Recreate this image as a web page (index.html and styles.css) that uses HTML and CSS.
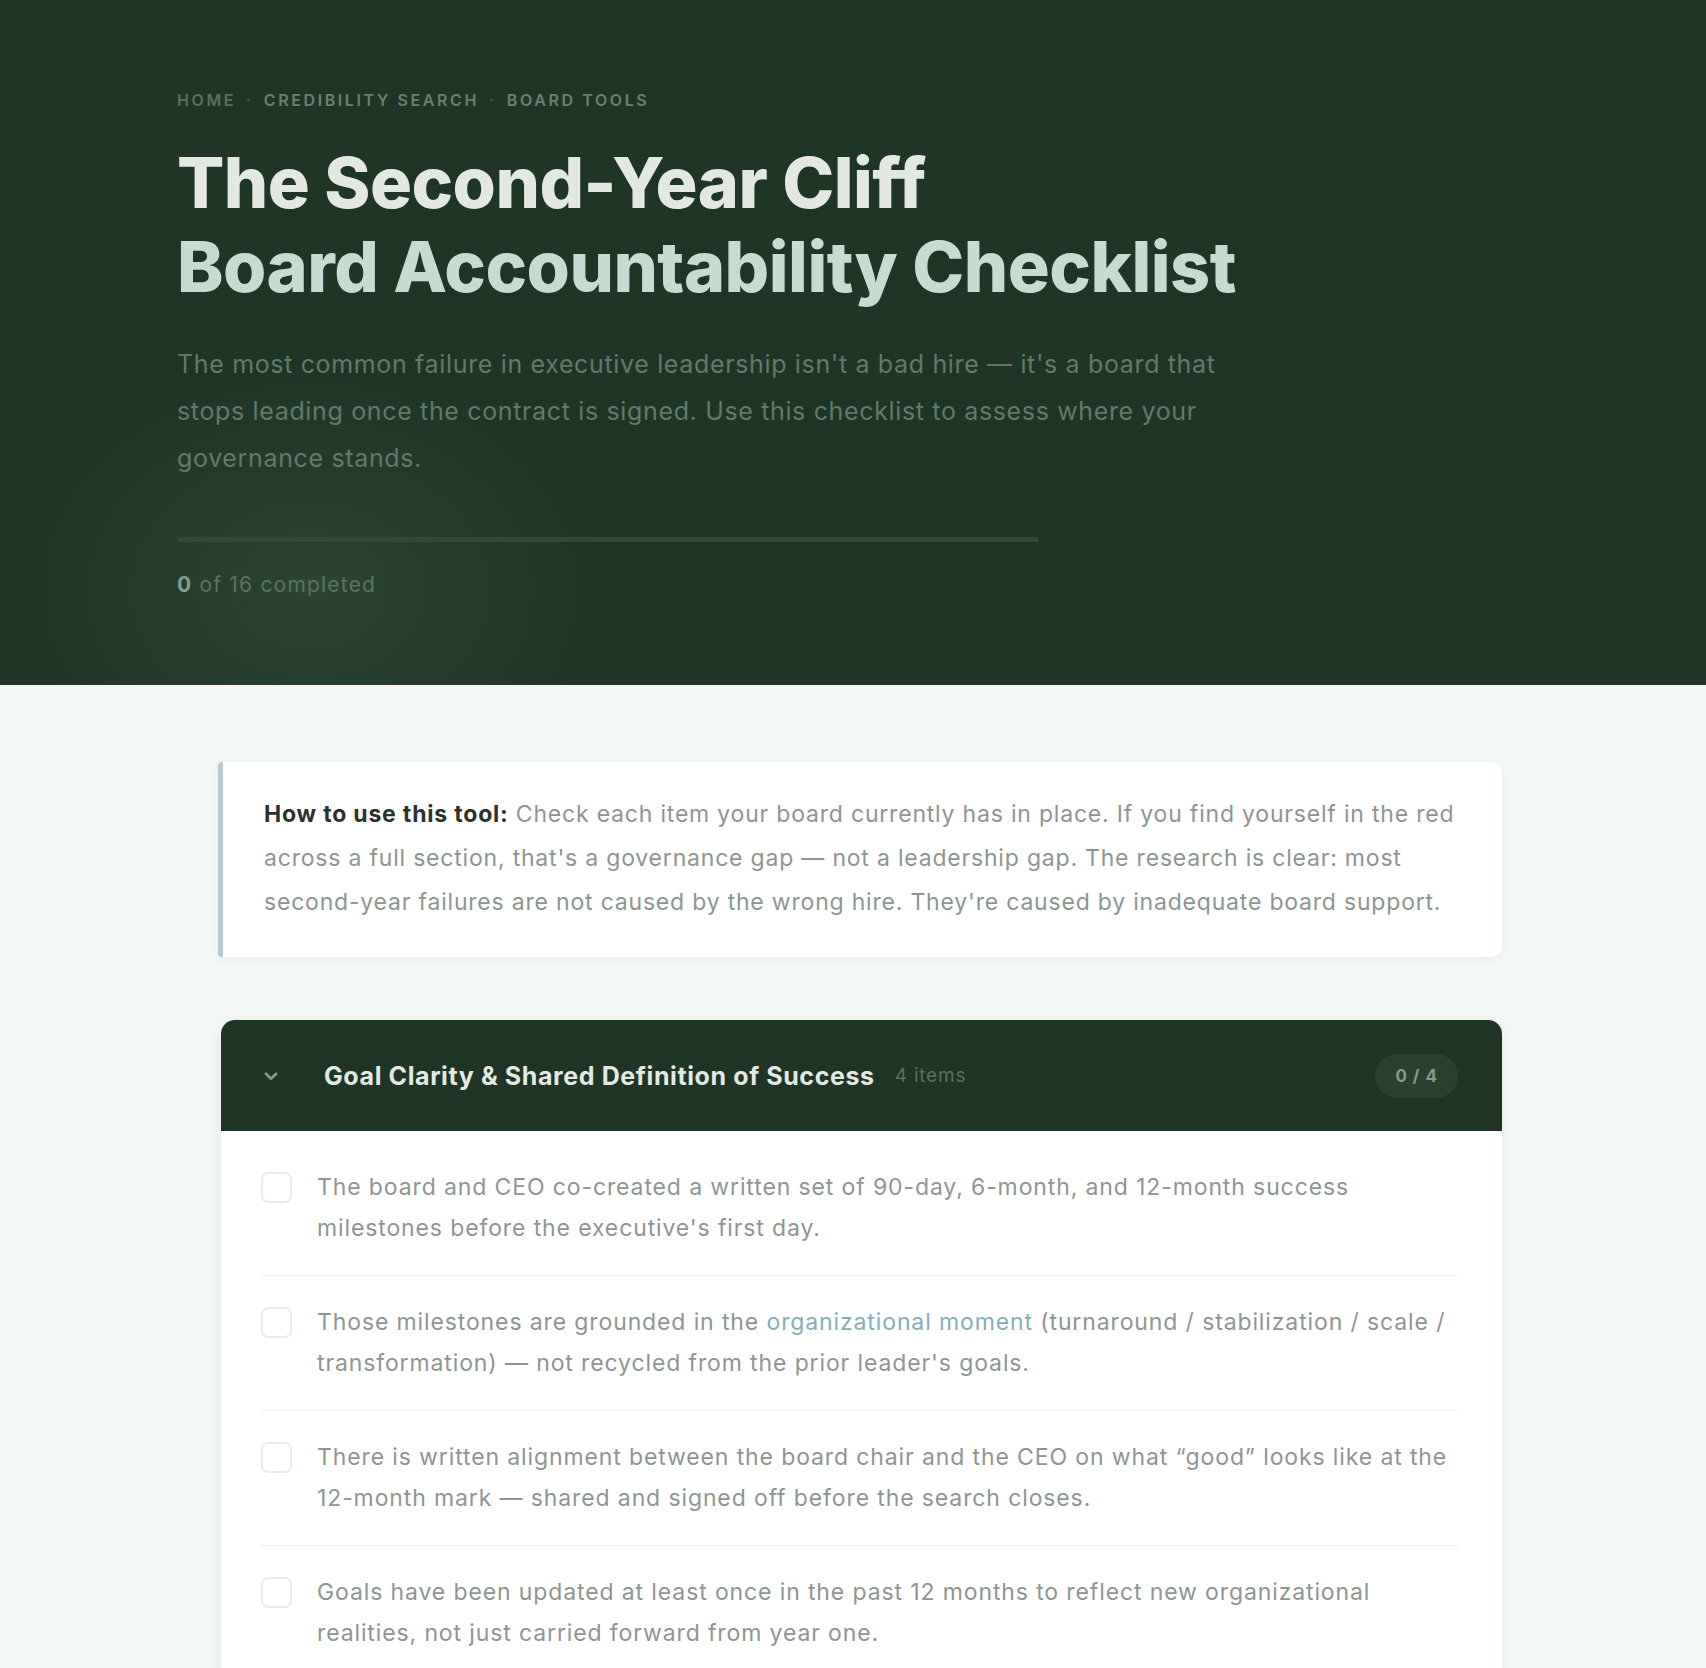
FILE: index.html
```html
<!DOCTYPE html>
<html lang="en">
<head>
<meta charset="utf-8">
<title>The Second-Year Cliff — Board Accountability Checklist</title>
<link rel="stylesheet" href="styles.css">
</head>
<body>
<header class="hero">
  <div class="hero-inner">
    <nav class="crumbs">
      <span class="crumb-home">Home</span>
      <span class="crumb-sep">·</span>
      <span>Credibility Search</span>
      <span class="crumb-sep">·</span>
      <span>Board Tools</span>
    </nav>
    <h1 class="title">
      <span class="title-l1">The Second-Year Cliff</span>
      <span class="title-l2">Board Accountability Checklist</span>
    </h1>
    <p class="lede">The most common failure in executive leadership isn't a bad hire — it's a board that stops leading once the contract is signed. Use this checklist to assess where your governance stands.</p>
    <div class="progress"><div class="progress-fill" style="width:0%"></div></div>
    <div class="progress-label"><strong>0</strong> of 16 completed</div>
  </div>
</header>

<main class="main">
  <section class="howto">
    <p><strong>How to use this tool:</strong> Check each item your board currently has in place. If you find yourself in the red across a full section, that's a governance gap — not a leadership gap. The research is clear: most second-year failures are not caused by the wrong hire. They're caused by inadequate board support.</p>
  </section>

  <section class="group">
    <div class="group-head">
      <svg class="chev" viewBox="0 0 16 16" width="18" height="18" aria-hidden="true"><path d="M3.5 6 L8 10.5 L12.5 6" fill="none" stroke="currentColor" stroke-width="2.4" stroke-linecap="round" stroke-linejoin="round"/></svg>
      <h2 class="group-title">Goal Clarity &amp; Shared Definition of Success</h2>
      <span class="group-count">4 items</span>
      <span class="badge">0 / 4</span>
    </div>
    <ul class="items">
      <li class="item"><span class="box"></span><p class="text">The board and CEO co-created a written set of 90-day, 6-month, and 12-month success milestones before the executive's first day.</p></li>
      <li class="item"><span class="box"></span><p class="text">Those milestones are grounded in the <a class="link" href="#">organizational moment</a> (turnaround / stabilization / scale / transformation) — not recycled from the prior leader's goals.</p></li>
      <li class="item"><span class="box"></span><p class="text">There is written alignment between the board chair and the CEO on what “good” looks like at the 12-month mark — shared and signed off before the search closes.</p></li>
      <li class="item"><span class="box"></span><p class="text">Goals have been updated at least once in the past 12 months to reflect new organizational realities, not just carried forward from year one.</p></li>
    </ul>
  </section>
</main>
</body>
</html>
```
FILE: styles.css
```css
* { box-sizing: border-box; }
html, body { margin: 0; padding: 0; }
body {
  background: #f3f7f5;
  font-family: "Inter", "Noto Sans", sans-serif;
  color: #8c9590;
}

.hero {
  height: 685px;
  background:
    radial-gradient(ellipse 300px 230px at 310px 590px, rgba(130,170,145,0.13), rgba(130,170,145,0) 100%),
    #1f3526;
}
.hero-inner {
  padding: 88px 0 0 177px;
}
.crumbs {
  display: flex;
  gap: 10px;
  font-size: 16px;
  font-weight: 600;
  letter-spacing: 2.6px;
  text-transform: uppercase;
  color: #66836f;
  line-height: 24px;
}
.crumb-home { color: #557260; }
.crumb-sep { color: #3f5949; }

.title {
  margin: 29px 0 0;
  font-family: "Inter", sans-serif;
  font-weight: 800;
  font-size: 70px;
  line-height: 84px;
  letter-spacing: -0.5px;
}
.title span { display: block; }
.title-l1 { color: #e4e8e3; }
.title-l2 { color: #c6dbd2; }

.lede {
  margin: 32px 0 0;
  max-width: 1090px;
  font-size: 25px;
  letter-spacing: 0.65px;
  line-height: 47px;
  color: #5f7b69;
}

.progress {
  margin-top: 55px;
  width: 862px;
  height: 5px;
  border-radius: 3px;
  background: #33493a;
}
.progress-fill { height: 100%; background: #7fa08c; border-radius: 3px; }
.progress-label {
  margin-top: 30px;
  font-size: 21px;
  letter-spacing: 1.2px;
  color: #58745f;
}
.progress-label strong { color: #7fa28c; font-weight: 700; }

.main {
  width: 1284px;
  margin: 77px 0 0 calc(50% - 635px);
}

.howto {
  background: #ffffff;
  border-left: 5px solid #b7cbd3;
  border-radius: 4px 10px 10px 4px;
  box-shadow: 0 2px 10px rgba(30,60,45,0.05);
  padding: 30px 24px 33px 41px;
}
.howto p {
  margin: 0;
  font-size: 23px;
  letter-spacing: 0.8px;
  line-height: 44px;
  color: #8c9691;
}
.howto strong { color: #2b322e; font-weight: 700; }

.group {
  margin-top: 63px;
  margin-left: 3px;
  background: #ffffff;
  border-radius: 14px;
  box-shadow: 0 3px 14px rgba(30,60,45,0.07);
  overflow: hidden;
}
.group-head {
  height: 111px;
  background: #1f3526;
  display: flex;
  align-items: center;
  padding: 0 44px 0 41px;
}
.chev { color: #7f9d89; flex: none; }
.group-title {
  margin: 0 0 0 44px;
  font-size: 25px;
  font-weight: 700;
  color: #e4e9e5;
  letter-spacing: 0.6px;
}
.group-count {
  margin-left: 20px;
  font-size: 19px;
  letter-spacing: 0.8px;
  color: #56715f;
}
.badge {
  margin-left: auto;
  padding: 0 20px;
  height: 44px;
  line-height: 44px;
  border-radius: 22px;
  background: rgba(255,255,255,0.06);
  color: #7d9e89;
  font-size: 17px;
  font-weight: 700;
  letter-spacing: 1px;
}

.items {
  list-style: none;
  margin: 0;
  padding: 10px 44px 0 40px;
}
.item {
  display: flex;
  align-items: flex-start;
  gap: 25px;
  padding: 26px 0;
  border-bottom: 1px solid #f0f2f1;
}
.box {
  flex: none;
  width: 31px;
  height: 31px;
  margin-top: 5px;
  border: 2px solid #e8ecea;
  border-radius: 7px;
  background: #fff;
}
.text {
  margin: 0;
  font-size: 23px;
  letter-spacing: 0.88px;
  line-height: 41px;
  color: #8d9692;
}
.link { color: #86adbc; text-decoration: none; }
```
